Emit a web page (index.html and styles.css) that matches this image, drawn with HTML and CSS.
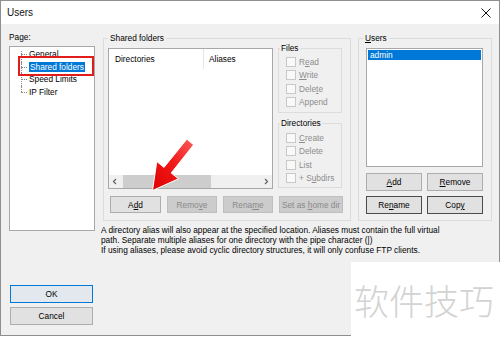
FILE: index.html
```html
<!DOCTYPE html>
<html lang="en">
<head>
  <meta charset="UTF-8">
  <title>Users</title>
  <link rel="stylesheet" href="styles.css">
</head>
<body>
  <div class="window">
    <div class="titlebar">
      <span class="title">Users</span>
      <svg class="close" width="10" height="10" viewBox="0 0 10 10">
        <path d="M0.5 0.5 L9.5 9.5 M9.5 0.5 L0.5 9.5" stroke="#111" stroke-width="1" fill="none" />
      </svg>
    </div>

    <div class="dialog">
      <div class="left-col">
        <div class="page-label">Page:</div>
        <div class="tree">
          <div class="tree-item">General</div>
          <div class="tree-item"><span class="selected">Shared folders</span></div>
          <div class="tree-item">Speed Limits</div>
          <div class="tree-item last">IP Filter</div>
          <div class="mark"></div>
        </div>
        <div class="dlg-buttons">
          <button class="btn default">OK</button>
          <button class="btn">Cancel</button>
        </div>
      </div>

      <div class="main-col">
        <div class="groups">
          <div class="group shared">
            <span class="group-title">Shared folders</span>
            <div class="shared-row">
              <div class="listview">
                <div class="lv-header">
                  <span class="col dirs">Directories</span>
                  <span class="col">Aliases</span>
                </div>
                <div class="lv-body"></div>
                <div class="hscroll">
                  <svg class="sb-arrow" width="12" height="13" viewBox="0 0 12 13"><path d="M7 4 L4.5 6.5 L7 9" stroke="#606060" stroke-width="1.2" fill="none" /></svg>
                  <div class="sb-track"><div class="sb-thumb"></div></div>
                  <svg class="sb-arrow" width="12" height="13" viewBox="0 0 12 13"><path d="M5 4 L7.5 6.5 L5 9" stroke="#606060" stroke-width="1.2" fill="none" /></svg>
                </div>
              </div>

              <div class="side-col">
                <div class="subgroup files">
                  <span class="group-title">Files</span>
                  <div class="check"><span class="box"></span><span>R<u>e</u>ad</span></div>
                  <div class="check"><span class="box"></span><span><u>W</u>rite</span></div>
                  <div class="check"><span class="box"></span><span>Dele<u>t</u>e</span></div>
                  <div class="check"><span class="box"></span><span>Append</span></div>
                </div>
                <div class="subgroup dirs-group">
                  <span class="group-title">Directories</span>
                  <div class="check"><span class="box"></span><span><u>C</u>reate</span></div>
                  <div class="check"><span class="box"></span><span>Delete</span></div>
                  <div class="check"><span class="box"></span><span>List</span></div>
                  <div class="check"><span class="box"></span><span>+ S<u>u</u>bdirs</span></div>
                </div>
              </div>
            </div>
            <div class="shared-buttons">
              <button class="btn w-add">A<u>d</u>d</button>
              <button class="btn disabled w-mid">Remo<u>v</u>e</button>
              <button class="btn disabled w-mid">Rena<u>m</u>e</button>
              <button class="btn disabled w-home">Set as <u>h</u>ome dir</button>
            </div>
          </div>

          <div class="group users">
            <span class="group-title"><u>U</u>sers</span>
            <div class="userlist">
              <div class="user-row selected-row">admin</div>
            </div>
            <div class="user-buttons">
              <button class="btn tall"><u>A</u>dd</button>
              <button class="btn tall"><u>R</u>emove</button>
              <button class="btn tall dark">Re<u>n</u>ame</button>
              <button class="btn tall dark">Cop<u>y</u></button>
            </div>
          </div>
        </div>

        <div class="info">
          <p>A directory alias will also appear at the specified location. Aliases must contain the full virtual<br>path. Separate multiple aliases for one directory with the pipe character (|)</p>
          <p class="second">If using aliases, please avoid cyclic directory structures, it will only confuse FTP clients.</p>
        </div>
      </div>
    </div>
  </div>

  <svg class="arrow" width="500" height="338" viewBox="0 0 500 338">
    <defs>
      <linearGradient id="red" x1="1" y1="0" x2="0" y2="1">
        <stop offset="0" stop-color="#ff5a5a" />
        <stop offset="0.5" stop-color="#f01818" />
        <stop offset="1" stop-color="#e00000" />
      </linearGradient>
    </defs>
    <polygon points="152.5,190.5 178.5,178.8 171.2,173 193.6,144.8 186.8,139.2 164,167.4 156.8,161.6" fill="url(#red)" stroke="#fff" stroke-width="1" stroke-linejoin="round" />
  </svg>

  <div class="watermark">软件技巧</div>
</body>
</html>
```

FILE: styles.css
```css
body {
  margin: 0;
  font-family: "Liberation Sans", Arial, sans-serif;
  font-size: 8.3px;
  color: #000;
  background: #fff;
}
.window {
  width: 500px;
  height: 336px;
  box-sizing: border-box;
  border: 1px solid #8f8f8f;
  background: #f0f0f0;
  display: flex;
  flex-direction: column;
}
.titlebar {
  height: 23px;
  background: #fff;
  display: flex;
  align-items: center;
  justify-content: space-between;
  padding: 0 8px 0 6px;
}
.title {
  font-size: 10px;
  color: #111;
}
.dialog {
  flex: 1;
  display: flex;
  gap: 8px;
  padding: 8px 7px 10px 8px;
}

/* left column */
.left-col {
  width: 86px;
  display: flex;
  flex-direction: column;
}
.page-label {
  line-height: 10px;
}
.tree {
  position: relative;
  margin-top: 4px;
  height: 185px;
  box-sizing: border-box;
  border: 1px solid #a8a8a8;
  background: #fff;
  padding-top: 1px;
}
.tree-item {
  position: relative;
  height: 12.5px;
  line-height: 12.5px;
  padding-left: 19px;
}
.tree-item::before {
  content: "";
  position: absolute;
  left: 11px;
  top: 6px;
  width: 6px;
  border-top: 1px dotted #888;
}
.tree-item::after {
  content: "";
  position: absolute;
  left: 11px;
  top: 0;
  height: 100%;
  border-left: 1px dotted #888;
}
.tree-item.last::after {
  height: 6px;
}
.tree-item:first-child::after {
  top: 3px;
}
.selected {
  display: inline-block;
  line-height: 10px;
  padding: 0 1px;
  background: #0078d7;
  color: #fff;
}
.mark {
  position: absolute;
  left: 8px;
  top: 9px;
  width: 72px;
  height: 16px;
  border: 2px solid #e21b1b;
}
.dlg-buttons {
  margin-top: auto;
  display: flex;
  flex-direction: column;
  gap: 4px;
  padding-left: 1px;
}
.dlg-buttons .btn {
  width: 83px;
  height: 18px;
}

/* buttons */
.btn {
  font: inherit;
  height: 17px;
  padding: 0;
  background: #e1e1e1;
  border: 1px solid #adadad;
  color: #000;
}
.btn.default {
  border-color: #0078d7;
  background: #e2e8ee;
}
.btn.disabled {
  background: #cccccc;
  border-color: #bfbfbf;
  color: #8a8a8a;
}
.btn.tall {
  height: 18px;
}
.btn.dark {
  border-color: #4c4c4c;
}

/* main column */
.main-col {
  flex: 1;
  padding-top: 6px;
}
.groups {
  display: flex;
  gap: 7px;
}
.group {
  position: relative;
  border: 1px solid #dcdcdc;
}
.group-title {
  position: absolute;
  top: -6px;
  left: 4px;
  padding: 0 2px;
  line-height: 10px;
  background: #f0f0f0;
}
.shared {
  width: 248px;
  box-sizing: border-box;
  padding: 9px 7px 5px 4px;
}
.shared-row {
  display: flex;
  gap: 5px;
}
.listview {
  width: 165px;
  height: 141px;
  box-sizing: border-box;
  border: 1px solid #a8a8a8;
  background: #fff;
  display: flex;
  flex-direction: column;
}
.lv-header {
  display: flex;
  height: 20px;
  line-height: 20px;
}
.col {
  padding-left: 5px;
}
.col.dirs {
  width: 88px;
  padding-left: 6px;
  border-right: 1px solid #e5e5e5;
}
.lv-body {
  flex: 1;
}
.hscroll {
  display: flex;
  height: 13px;
  background: #f0f0f0;
}
.sb-track {
  flex: 1;
  display: flex;
  align-items: center;
  padding: 0 2px;
}
.sb-thumb {
  width: 88px;
  height: 13px;
  background: #cdcdcd;
}
.side-col {
  width: 64px;
}
.subgroup {
  position: relative;
  border: 1px solid #dcdcdc;
  padding: 6px 0 3px 7px;
}
.subgroup .group-title {
  left: 1px;
  padding: 0 1px;
}
.dirs-group {
  margin-top: 10px;
  padding: 7px 0 2px 7px;
}
.check {
  display: flex;
  align-items: center;
  gap: 3px;
  height: 13.5px;
  color: #8d8d8d;
}
.box {
  width: 8px;
  height: 8px;
  border: 1px solid #c8c8c8;
  background: #f9f9f9;
}
.shared-buttons {
  display: flex;
  gap: 6px;
  margin-top: 7px;
  padding-left: 2px;
}
.w-add {
  width: 51px;
}
.w-mid {
  width: 50px;
}
.w-home {
  width: 64px;
}

.users {
  flex: 1;
  padding: 9px 8px 6px 7px;
}
.userlist {
  height: 119px;
  box-sizing: border-box;
  border: 1px solid #a8a8a8;
  background: #fff;
  padding: 1px;
}
.user-row {
  line-height: 10px;
  padding-left: 2px;
}
.selected-row {
  background: #0078d7;
  color: #fff;
}
.user-buttons {
  display: grid;
  grid-template-columns: 1fr 1fr;
  gap: 5px;
  margin-top: 6px;
}

.info {
  margin: 5px 0 0 -2px;
  line-height: 9.5px;
}
.info p {
  margin: 0;
}
.info .second {
  margin-top: 1px;
}

/* overlays */
.arrow {
  position: absolute;
  left: 0;
  top: 0;
  pointer-events: none;
}
.watermark {
  position: absolute;
  left: 351px;
  top: 262px;
  width: 149px;
  height: 76px;
  background: #fff;
  color: #d3d3d3;
  font-family: "Noto Sans CJK SC", sans-serif;
  font-weight: 300;
  font-size: 35px;
  line-height: 76px;
  padding-left: 3px;
  box-sizing: border-box;
}
```
